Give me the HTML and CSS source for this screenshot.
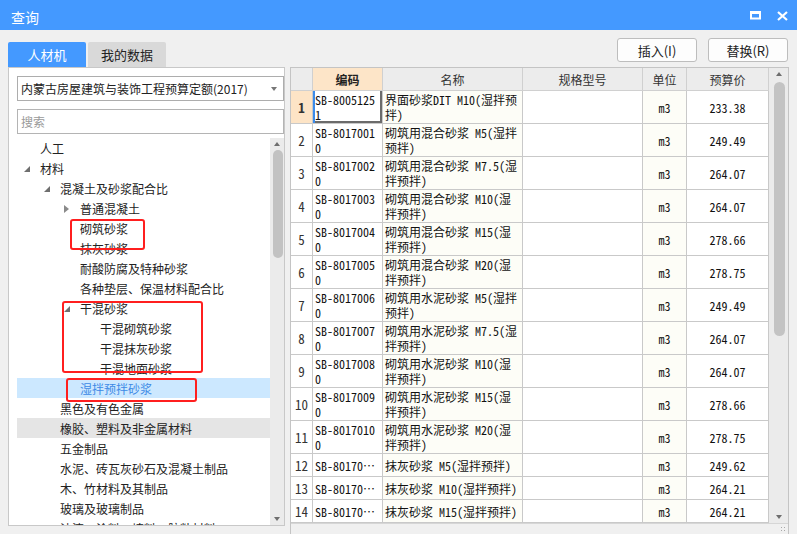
FILE: index.html
```html
<!DOCTYPE html>
<html lang="zh-CN">
<head>
<meta charset="utf-8">
<title>查询</title>
<link rel="stylesheet" href="styles.css">
</head>
<body>
<div class="titlebar">
  <span class="title">查询</span>
  <div class="winbtns">
    <svg width="11" height="9" viewBox="0 0 11 9"><rect x="1" y="1.5" width="9" height="6" fill="none" stroke="#fff" stroke-width="2"/><rect x="0" y="0" width="11" height="3" fill="#fff"/></svg>
    <svg width="11" height="10" viewBox="0 0 11 10"><path d="M1 1 L10 9 M10 1 L1 9" stroke="#fff" stroke-width="2.2" fill="none"/></svg>
  </div>
</div>
<div class="toolbar">
  <div class="tabs">
    <div class="tab active">人材机</div>
    <div class="tab">我的数据</div>
  </div>
  <div class="actions">
    <button class="btn">插入(I)</button>
    <button class="btn">替换(R)</button>
  </div>
</div>
<div class="main">
  <div class="left">
    <div class="combo"><span>内蒙古房屋建筑与装饰工程预算定额(2017)</span><span class="caret"></span></div>
    <div class="search">搜索</div>
    <div class="treewrap">
      <div class="tree">
        <div class="row l1"><span class="tw"></span><span>人工</span></div>
        <div class="row l1"><span class="tw"><i class="exp"></i></span><span>材料</span></div>
        <div class="row l2"><span class="tw"><i class="exp"></i></span><span>混凝土及砂浆配合比</span></div>
        <div class="row l3"><span class="tw"><i class="col"></i></span><span>普通混凝土</span></div>
        <div class="row l3"><span class="tw"></span><span>砌筑砂浆</span></div>
        <div class="row l3"><span class="tw"></span><span>抹灰砂浆</span></div>
        <div class="row l3"><span class="tw"></span><span>耐酸防腐及特种砂浆</span></div>
        <div class="row l3"><span class="tw"></span><span>各种垫层、保温材料配合比</span></div>
        <div class="row l3"><span class="tw"><i class="exp"></i></span><span>干混砂浆</span></div>
        <div class="row l4"><span class="tw"></span><span>干混砌筑砂浆</span></div>
        <div class="row l4"><span class="tw"></span><span>干混抹灰砂浆</span></div>
        <div class="row l4"><span class="tw"></span><span>干混地面砂浆</span></div>
        <div class="row l3 selected"><span class="tw"></span><span>湿拌预拌砂浆</span></div>
        <div class="row l2"><span class="tw"></span><span>黑色及有色金属</span></div>
        <div class="row l2 hover"><span class="tw"></span><span>橡胶、塑料及非金属材料</span></div>
        <div class="row l2"><span class="tw"></span><span>五金制品</span></div>
        <div class="row l2"><span class="tw"></span><span>水泥、砖瓦灰砂石及混凝土制品</span></div>
        <div class="row l2"><span class="tw"></span><span>木、竹材料及其制品</span></div>
        <div class="row l2"><span class="tw"></span><span>玻璃及玻璃制品</span></div>
        <div class="row l2"><span class="tw"></span><span>油漆、涂料、填料、胶粘材料</span></div>
      </div>
      <div class="vs">
        <span class="arr up"></span>
        <span class="thumb"></span>
        <span class="arr down"></span>
      </div>
    </div>
  </div>
  <div class="right">
    <div class="gridarea">
      <div class="grid">
        <div class="h"></div><div class="h code">编码</div><div class="h">名称</div><div class="h">规格型号</div><div class="h">单位</div><div class="h">预算价</div>

        <div class="c n cur">1</div><div class="c t focus">SB-8005125<br>1</div><div class="c t nm">界面砂浆DIT M10(湿拌预<br>拌)</div><div class="c"></div><div class="c u">m3</div><div class="c p">233.38</div>
        <div class="c n">2</div><div class="c t">SB-8017001<br>0</div><div class="c t nm">砌筑用混合砂浆 M5(湿拌<br>预拌)</div><div class="c"></div><div class="c u">m3</div><div class="c p">249.49</div>
        <div class="c n">3</div><div class="c t">SB-8017002<br>0</div><div class="c t nm">砌筑用混合砂浆 M7.5(湿<br>拌预拌)</div><div class="c"></div><div class="c u">m3</div><div class="c p">264.07</div>
        <div class="c n">4</div><div class="c t">SB-8017003<br>0</div><div class="c t nm">砌筑用混合砂浆 M10(湿<br>拌预拌)</div><div class="c"></div><div class="c u">m3</div><div class="c p">264.07</div>
        <div class="c n">5</div><div class="c t">SB-8017004<br>0</div><div class="c t nm">砌筑用混合砂浆 M15(湿<br>拌预拌)</div><div class="c"></div><div class="c u">m3</div><div class="c p">278.66</div>
        <div class="c n">6</div><div class="c t">SB-8017005<br>0</div><div class="c t nm">砌筑用混合砂浆 M20(湿<br>拌预拌)</div><div class="c"></div><div class="c u">m3</div><div class="c p">278.75</div>
        <div class="c n">7</div><div class="c t">SB-8017006<br>0</div><div class="c t nm">砌筑用水泥砂浆 M5(湿拌<br>预拌)</div><div class="c"></div><div class="c u">m3</div><div class="c p">249.49</div>
        <div class="c n">8</div><div class="c t">SB-8017007<br>0</div><div class="c t nm">砌筑用水泥砂浆 M7.5(湿<br>拌预拌)</div><div class="c"></div><div class="c u">m3</div><div class="c p">264.07</div>
        <div class="c n">9</div><div class="c t">SB-8017008<br>0</div><div class="c t nm">砌筑用水泥砂浆 M10(湿<br>拌预拌)</div><div class="c"></div><div class="c u">m3</div><div class="c p">264.07</div>
        <div class="c n">10</div><div class="c t">SB-8017009<br>0</div><div class="c t nm">砌筑用水泥砂浆 M15(湿<br>拌预拌)</div><div class="c"></div><div class="c u">m3</div><div class="c p">278.66</div>
        <div class="c n">11</div><div class="c t">SB-8017010<br>0</div><div class="c t nm">砌筑用水泥砂浆 M20(湿<br>拌预拌)</div><div class="c"></div><div class="c u">m3</div><div class="c p">278.75</div>
        <div class="c n s">12</div><div class="c s1">SB-80170…</div><div class="c s1 nm">抹灰砂浆 M5(湿拌预拌)</div><div class="c s"></div><div class="c u s">m3</div><div class="c p s">249.62</div>
        <div class="c n s">13</div><div class="c s1">SB-80170…</div><div class="c s1 nm">抹灰砂浆 M10(湿拌预拌)</div><div class="c s"></div><div class="c u s">m3</div><div class="c p s">264.21</div>
        <div class="c n s">14</div><div class="c s1">SB-80170…</div><div class="c s1 nm">抹灰砂浆 M15(湿拌预拌)</div><div class="c s"></div><div class="c u s">m3</div><div class="c p s">264.21</div>
      </div>
      <div class="vs2">
        <span class="arr up"></span>
        <span class="thumb2"></span>
        <span class="arr down"></span>
      </div>
    </div>
    <div class="hbar"><span class="grip"></span></div>
  </div>
</div>
<div class="mark m1"></div>
<div class="mark m2"></div>
<div class="mark m3"></div>
</body>
</html>
```
FILE: styles.css
```css
* { box-sizing: border-box; }
body {
  margin: 0;
  width: 797px;
  height: 534px;
  overflow: hidden;
  position: relative;
  background: #f0f0f0;
  font-family: "Noto Sans CJK SC", "Microsoft YaHei", sans-serif;
  font-size: 12px;
  color: #222;
}
.titlebar {
  height: 30px;
  background: #4499ff;
  display: flex;
  align-items: center;
  justify-content: space-between;
  padding: 0 9px 0 11px;
  color: #fff;
}
.title { font-size: 14px; padding-top: 4px; }
.winbtns { display: flex; gap: 16px; align-items: center; padding-top: 1px; }
.winbtns svg { display: block; }

.toolbar {
  height: 37px;
  display: flex;
  justify-content: space-between;
  padding: 0 9px 0 8px;
}
.tabs { display: flex; gap: 2px; align-self: flex-end; }
.tab {
  width: 78px;
  height: 25px;
  display: flex;
  align-items: center;
  justify-content: center;
  background: #d9d9d9;
  border-radius: 2px 2px 0 0;
  font-size: 13px;
  color: #222;
}
.tab.active { background: #4499ff; color: #fff; }
.actions { display: flex; gap: 11px; padding-top: 8px; }
.btn {
  width: 80px;
  height: 24px;
  border: 1px solid #bdbdbd;
  border-radius: 3px;
  background: #fdfdfd;
  font-family: "Noto Sans CJK SC", sans-serif;
  font-size: 13px;
  color: #222;
  padding: 0;
}

.main { display: flex; gap: 5px; padding-left: 8px; height: 467px; }
.left {
  width: 277px;
  height: 459px;
  border: 1px solid #c8c8c8;
  background: #fff;
  padding: 8px 0 0 8px;
  display: flex;
  flex-direction: column;
}
.combo {
  height: 25px;
  border: 1px solid #adadad;
  padding: 0 6px 0 3px;
  display: flex;
  align-items: center;
  justify-content: space-between;
  flex: none;
}
.caret {
  width: 0; height: 0;
  border-left: 3px solid transparent;
  border-right: 3px solid transparent;
  border-top: 4px solid #777;
}
.search {
  height: 25px;
  margin-top: 8px;
  border: 1px solid #b4b4b4;
  padding-left: 3px;
  color: #9a9a9a;
  display: flex;
  align-items: center;
  flex: none;
}
.treewrap { margin-top: 4px; flex: 1; display: flex; overflow: hidden; }
.tree { flex: 1; overflow: hidden; }
.row { height: 20px; display: flex; align-items: center; white-space: nowrap; }
.l1 { padding-left: 7px; }
.l2 { padding-left: 27px; }
.l3 { padding-left: 47px; }
.l4 { padding-left: 67px; }
.tw { width: 16px; height: 20px; position: relative; flex: none; }
.exp {
  position: absolute; left: 0; top: 8px;
  width: 0; height: 0;
  border-left: 6px solid transparent;
  border-bottom: 6px solid #6f6f6f;
}
.col {
  position: absolute; left: 0; top: 7px;
  width: 0; height: 0;
  border-top: 4px solid transparent;
  border-bottom: 4px solid transparent;
  border-left: 5px solid #8a8a8a;
}
.row.selected { background: #cce8ff; color: #3d8ae6; }
.row.hover { background: #e5e5e5; }

.vs {
  width: 14px;
  background: #ebebeb;
  position: relative;
  flex: none;
}
.arr {
  position: absolute;
  left: 50%;
  margin-left: -3px;
  width: 0; height: 0;
  border-left: 3.5px solid transparent;
  border-right: 3.5px solid transparent;
}
.arr.up { top: 4px; border-bottom: 4px solid #6e6e6e; }
.arr.down { bottom: 4px; border-top: 4px solid #6e6e6e; }
.thumb {
  position: absolute; left: 3px; top: 12px;
  width: 10px; height: 108px;
  border-radius: 5px;
  background: #c2c2c2;
}

.right {
  width: 499px;
  height: 470px;
  border: 1px solid #c4c4c4;
  border-bottom: none;
  display: flex;
  flex-direction: column;
}
.gridarea { display: flex; height: 455px; }
.grid {
  width: 478px;
  display: grid;
  grid-template-columns: 22px 70px 140px 120px 44px 82px;
  grid-template-rows: 23px repeat(11, 33px) repeat(3, 23px);
  background: #fff;
  font-family: "Noto Sans Mono CJK SC", "Liberation Mono", "Noto Sans CJK SC", monospace;
  font-size: 12px;
  color: #111;
}
.h {
  background: #ececec;
  border-right: 1px solid #d0d0d0;
  border-bottom: 1px solid #d0d0d0;
  font-family: "Noto Sans CJK SC", sans-serif;
  color: #333;
  display: flex;
  align-items: center;
  justify-content: center;
}
.h.code { background: #fde5c8; font-weight: bold; color: #222; }
.c {
  border-right: 1px solid #c9c9c9;
  border-bottom: 1px solid #c9c9c9;
  overflow: hidden;
  white-space: nowrap;
}
.t { padding: 1px 0 0 2px; line-height: 15px; }
.s1 { padding-left: 2px; display: flex; align-items: center; }
.nm { background: #fdfdf7; }
.u { background: #fdfdf7; display: flex; align-items: center; justify-content: center; }
.p { display: flex; align-items: center; justify-content: center; }
.n { display: flex; align-items: center; justify-content: center; color: #333; font-size: 13px; }
.n.cur { background: #fde4c6; font-weight: bold; }
.focus { box-shadow: inset 2px 0 0 #3b8beb, inset -2px -2px 0 #6b6b6b; }

.vs2 {
  width: 19px;
  background: #ebebeb;
  position: relative;
}
.thumb2 {
  position: absolute; left: 5px; top: 14px;
  width: 11px; height: 254px;
  border-radius: 5.5px;
  background: #c3c3c3;
}
.hbar {
  height: 12px;
  border-top: 1px solid #d6d6d6;
  background: #f0f0f0;
  position: relative;
}
.grip {
  position: absolute; right: 1px; bottom: 2px;
  width: 7px; height: 7px;
  background: radial-gradient(circle, #a8a8a8 0.8px, transparent 1px) 0 0 / 3px 3px;
}

.mark {
  position: absolute;
  border: 2px solid #ff1f1f;
  border-radius: 3px;
}
.m1 { left: 70px; top: 219px; width: 75px; height: 31px; }
.m2 { left: 62px; top: 301px; width: 141px; height: 72px; }
.m3 { left: 66px; top: 378px; width: 131px; height: 24px; }
```
